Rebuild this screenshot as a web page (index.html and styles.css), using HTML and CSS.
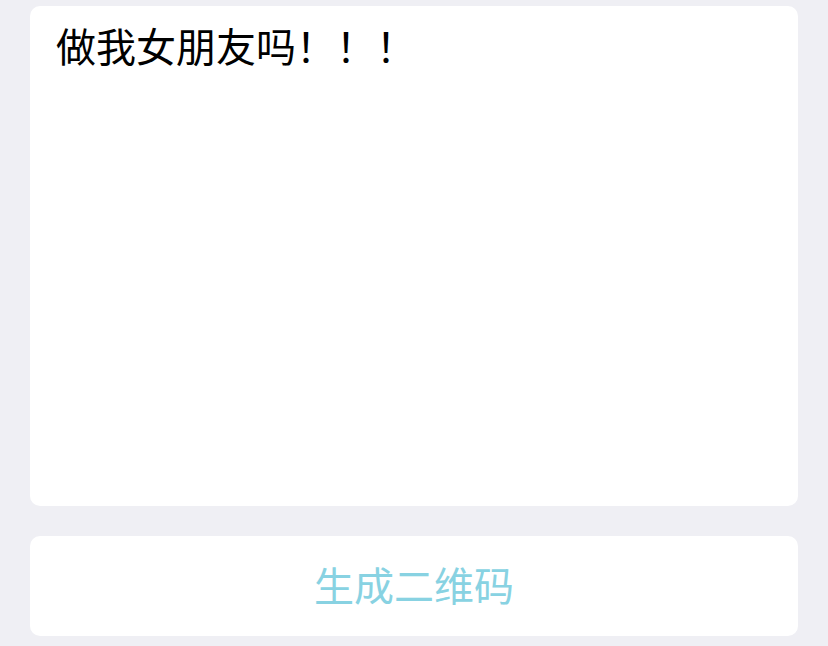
FILE: index.html
```html
<!DOCTYPE html>
<html lang="zh-CN">
<head>
    <meta charset="UTF-8">
    <meta name="viewport" content="width=device-width, initial-scale=1.0">
    <title>生成二维码</title>
    <link rel="stylesheet" href="styles.css">
</head>
<body>
    <div class="page">
        <div class="input-card">
            <textarea class="message-input" id="messageInput">做我女朋友吗！！！</textarea>
        </div>
        <button type="button" class="generate-button">生成二维码</button>
    </div>
</body>
</html>
```

FILE: styles.css
```css
body {
    background-color: #efeff4;
    margin: 0;
    font-family: "Noto Sans CJK SC", "Noto Sans", sans-serif;
}

.page {
    padding: 6px 30px 10px;
    display: flex;
    flex-direction: column;
    gap: 30px;
}

.input-card {
    background-color: #fff;
    border-radius: 10px;
    height: 500px;
    box-sizing: border-box;
    padding: 11px 26px 16px;
}

.message-input {
    display: block;
    width: 100%;
    height: 100%;
    border: none;
    outline: none;
    resize: none;
    padding: 0;
    margin: 0;
    background: transparent;
    font-family: "Noto Sans CJK SC", "Noto Sans", sans-serif;
    font-size: 40px;
    line-height: 56px;
    color: #000;
}

.generate-button {
    display: block;
    width: 100%;
    height: 100px;
    border: none;
    border-radius: 10px;
    background-color: #fff;
    color: #88d2e2;
    font-family: "Noto Sans CJK SC", "Noto Sans", sans-serif;
    font-size: 40px;
    padding: 0 0 4px;
    cursor: pointer;
}
```
